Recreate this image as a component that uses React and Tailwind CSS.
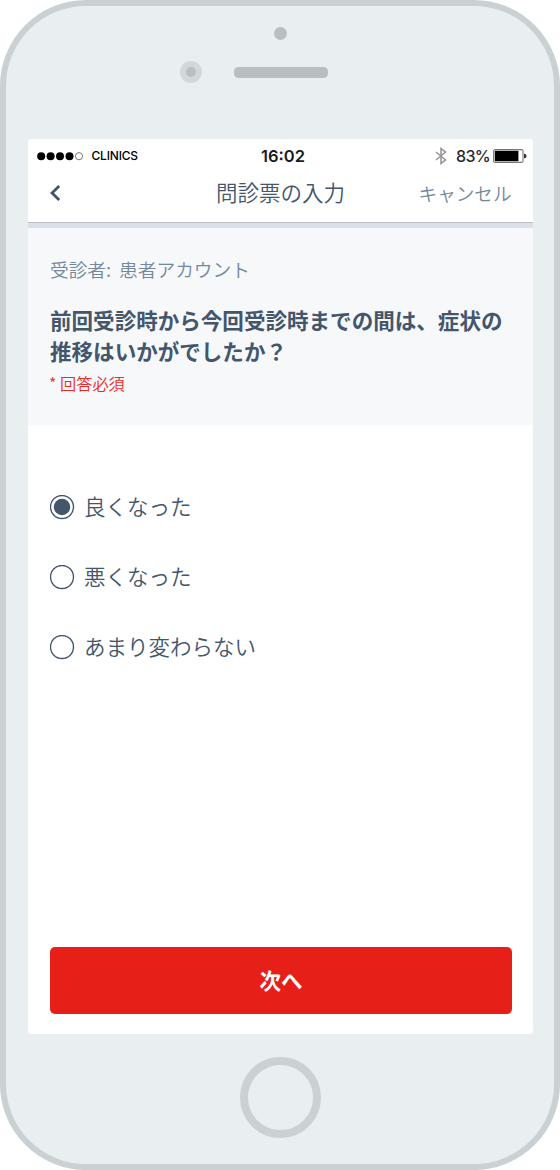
import { useState } from "react";

const OPTIONS = ["良くなった", "悪くなった", "あまり変わらない"];

function PhoneTop() {
  return (
    <div className="h-[133px] shrink-0 pt-[21px]">
      <div className="ml-[268px] h-[13px] w-[13px] rounded-full bg-[#b8bfc1]" />
      <div className="mt-[21px] flex items-center">
        <div className="ml-[174px] flex h-[22px] w-[22px] items-center justify-center rounded-full bg-[#d2d7da]">
          <div className="h-[10px] w-[10px] rounded-full bg-[#b8bfc1]" />
        </div>
        <div className="ml-[31.5px] h-[11px] w-[94.5px] rounded-[4.5px] bg-[#b8bfc1]" />
      </div>
    </div>
  );
}

function StatusBar() {
  return (
    <div className="grid h-[34px] grid-cols-3 items-center pl-[9px] pr-[6px] font-['Inter','Liberation_Sans',sans-serif]">
      <div className="flex items-center">
        <svg width="47" height="10" viewBox="0 0 47 10">
          <circle cx="4.2" cy="5.2" r="4" fill="#000" />
          <circle cx="13.6" cy="5.2" r="4" fill="#000" />
          <circle cx="23" cy="5.2" r="4" fill="#000" />
          <circle cx="32.5" cy="5.2" r="4" fill="#000" />
          <circle cx="42" cy="5.2" r="3.6" fill="#fff" stroke="#777" strokeWidth="1" />
        </svg>
        <span className="ml-[7.5px] text-[12px] font-medium leading-none tracking-[-0.2px] text-black">CLINICS</span>
      </div>
      <div className="pl-[2px] text-center text-[16.5px] font-semibold leading-none text-[#1a1a1a]">16:02</div>
      <div className="flex items-center justify-end">
        <svg width="12" height="18" viewBox="0 0 12 18" fill="none" stroke="#9a9a9a" strokeWidth="1.6">
          <path d="M1 5 L10.5 13 L6 16.5 V1.5 L10.5 5 L1 13" />
        </svg>
        <span className="ml-[9px] text-[16px] font-medium leading-none tracking-[-0.7px] text-[#2a2a2a]">83%</span>
        <svg className="ml-[3px]" width="34" height="14" viewBox="0 0 34 14">
          <rect x="0.6" y="0.6" width="29.4" height="12.8" rx="1.5" fill="#fff" stroke="#777" strokeWidth="1.1" />
          <rect x="1.8" y="1.8" width="23.6" height="10.4" fill="#000" />
          <path d="M31 4.5 Q33.6 5 33.6 7 Q33.6 9 31 9.5 Z" fill="#333" />
        </svg>
      </div>
    </div>
  );
}

function NavBar() {
  return (
    <div className="flex h-[50px] items-center border-b border-[#bcc1c7] px-[21.5px] pb-[11px]">
      <button aria-label="戻る" className="flex-1 pt-[2px]">
        <svg width="12" height="18" viewBox="0 0 12 18" fill="none" stroke="#44566c" strokeWidth="2.8">
          <path d="M9.2 2 L2 9 L9.2 16" />
        </svg>
      </button>
      <h1 className="whitespace-nowrap text-center text-[21.5px] font-[350] leading-[30px] text-[#44566c]">問診票の入力</h1>
      <button className="flex-1 pt-[2px] text-right text-[18.6px] font-[350] leading-[30px] text-[#74879b]">キャンセル</button>
    </div>
  );
}

function Radio({ label, checked, onSelect }) {
  return (
    <button role="radio" aria-checked={checked} onClick={onSelect} className="flex h-[30px] items-center gap-[9px]">
      <svg width="25" height="25" viewBox="0 0 25 25">
        <circle cx="12" cy="12" r="11.5" fill="#fff" stroke="#44566c" strokeWidth="1.4" />
        {checked && <circle cx="12" cy="12" r="8.2" fill="#44566c" />}
      </svg>
      <span className="-mt-[2px] text-[21.5px] font-[350] leading-[30px] text-[#44566c]">{label}</span>
    </button>
  );
}

export default function App() {
  const [selected, setSelected] = useState(0);

  return (
    <div className="flex h-[1170px] w-[560px] flex-col rounded-[86px] border-[6px] border-[#cad1d3] bg-[#e9eef1] font-['Noto_Sans_CJK_JP',sans-serif]">
      <PhoneTop />

      {/* Screen */}
      <div className="ml-[22px] flex h-[895px] w-[505px] shrink-0 flex-col overflow-hidden rounded-[3px] bg-white">
        <StatusBar />
        <NavBar />

        <div className="h-[202px] border-t-[5px] border-[#dbe0e6] bg-[#f6f8fa] px-[22px] pt-[27px]">
          <p className="text-[18.7px] font-[350] leading-[28px] text-[#74879b]">
            受診者:<span className="ml-[8px]">患者アカウント</span>
          </p>
          <h2 className="mt-[21px] whitespace-nowrap text-[21.55px] font-bold leading-[31px] text-[#44566c]">
            前回受診時から今回受診時までの間は、症状の
            <br />
            推移はいかがでしたか？
          </h2>
          <p className="-ml-px mt-[5px] text-[16.2px] font-[350] leading-[24px] text-[#ec2a26]">* 回答必須</p>
        </div>

        <div role="radiogroup" className="flex flex-1 flex-col items-start gap-[40px] px-[22px] pt-[67px]">
          {OPTIONS.map((label, i) => (
            <Radio key={label} label={label} checked={selected === i} onSelect={() => setSelected(i)} />
          ))}
        </div>

        <button className="mx-[22px] mb-[20px] h-[67px] w-[462px] rounded-[5px] bg-[#e71f19] pb-[2px] text-[21.5px] font-bold leading-none text-white">
          次へ
        </button>
      </div>

      {/* Home button */}
      <div className="ml-[234px] mt-[23px] h-[81px] w-[81px] shrink-0 rounded-full border-[8px] border-[#cad1d3]" />
    </div>
  );
}
